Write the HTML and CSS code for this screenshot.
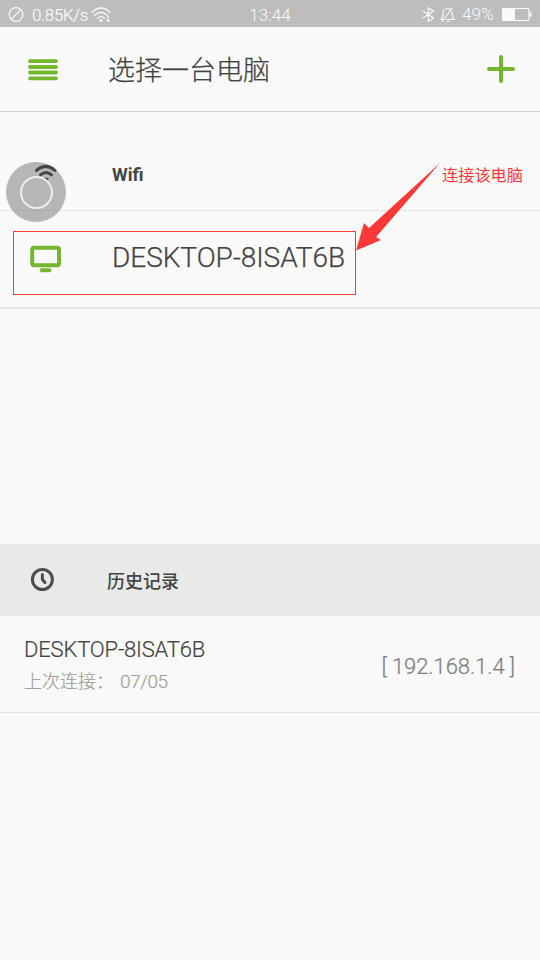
FILE: index.html
```html
<!DOCTYPE html>
<html lang="zh-CN">
<head>
<meta charset="utf-8">
<title>选择一台电脑</title>
<link rel="stylesheet" href="styles.css">
</head>
<body>
<main class="screen">
  <div class="status">
    <div class="status-left">
      <svg class="icon" width="16" height="16" viewBox="0 0 16 16"><circle cx="8" cy="7.500" r="6.800"/><path d="M3.200 12.300 12.800 2.700"/></svg>
      <span class="speed">0.85K/s</span>
      <svg class="icon signal" width="20" height="16" viewBox="0 0 20 16"><path d="M1 5.200Q10-3.200 19 5.200M3.700 8.300Q10 2.500 16.300 8.300M6.400 11.300Q10 8 13.600 11.300"/><circle class="dot" cx="10" cy="13.500" r="1.500"/><circle class="dot" cx="17" cy="10" r="1.100"/><circle class="dot" cx="17" cy="13.500" r="1.400"/></svg>
    </div>
    <span class="clock">13:44</span>
    <div class="status-right">
      <svg class="icon" width="13" height="16" viewBox="0 0 13 16"><path d="m1 4 10.500 7L6.300 14.500V.8L11.500 4 1 11"/></svg>
      <svg class="icon bell" width="15" height="16" viewBox="0 0 15 16"><path d="M4 12.500H1c2-2 2-4 2-6C3 3.500 5 1.500 7.500 1.500c1 0 2 .3 2.800 1M12 5c.2 3-.2 5.500 2 7.500H6.500M7 14.500h2M2 14.500 12.500 1"/></svg>
      <span class="percent">49%</span>
      <svg class="icon" width="30" height="14" viewBox="0 0 30 14"><rect x=".5" y=".5" width="26.500" height="12" rx="1"/><path class="dot" d="M1 1h12v11H1zM27.500 4.500h2v4h-2z"/></svg>
    </div>
  </div>
  <header class="header">
    <svg class="menu" width="30" height="22" viewBox="0 0 30 22"><path d="M2 2.200h26M2 8h26M2 13.500h26M2 19.300h26"/></svg>
    <h1 class="title">选择一台电脑</h1>
    <svg class="plus" width="28" height="28" viewBox="0 0 28 28"><path d="M14 2v24M2 14h24"/></svg>
  </header>
  <section class="wifi">
    <svg class="wifi-icon" width="24" height="20" viewBox="0 0 24 20"><path d="M2.500 6.500Q12-1.800 21 6.500M6.500 10.800Q12 6.300 17.500 10.800"/><path class="dot" d="M9 14.800q3-2.300 6 0L12 17.500z"/></svg>
    <h2 class="wifi-label">Wifi</h2>
    <span class="note">连接该电脑</span>
  </section>
  <section class="computer">
    <svg class="monitor" width="32" height="28" viewBox="0 0 32 28"><rect x="2.200" y="2.700" width="26.800" height="17.500" rx="2"/><path d="M11.800 25.200h7.500"/></svg>
    <span class="computer-name">DESKTOP-8ISAT6B</span>
  </section>
  <section class="history">
    <svg class="history-icon" width="24" height="24" viewBox="0 0 24 24"><circle cx="12.400" cy="11.500" r="10"/><path d="M12.400 6.500v5l2.600 3"/></svg>
    <h2 class="history-label">历史记录</h2>
  </section>
  <section class="entry">
    <div class="entry-main">
      <div class="entry-name">DESKTOP-8ISAT6B</div>
      <div class="entry-last"><span class="last-label">上次连接：</span><span class="date">07/05</span></div>
    </div>
    <span class="ip">[ 192.168.1.4 ]</span>
  </section>
  <div class="highlight"></div>
  <svg class="arrow" width="90" height="92" viewBox="0 0 90 92"><path d="M85 3 21 77l5 3-25 10.500L9 63l5 5z"/></svg>
  <div class="assist"><span class="assist-ring"></span></div>
</main>
</body>
</html>
```
FILE: styles.css
```css
* { box-sizing: border-box; }
body { margin: 0; background: #f9f9f9; font-family: Roboto, "Noto Sans CJK SC", sans-serif; color: #444; }
svg { display: block; flex: none; fill: none; overflow: visible; stroke-linecap: round; stroke-linejoin: round; }
h1, h2 { margin: 0; }
.screen { position: relative; width: 540px; height: 960px; overflow: hidden; }
.status { height: 27px; padding: 0 8px; display: grid; grid-template-columns: 1fr auto 1fr; align-items: center; background: #bdbdbd; color: #fafafa; font-size: 17px; font-weight: 300; line-height: 27px; }
.status-left, .status-right { display: flex; align-items: center; }
.status-right { justify-content: flex-end; }
.icon { stroke: #fafafa; stroke-width: 1.2; }
.dot { fill: #fafafa; stroke: none; }
.speed { margin-left: 8px; width: 59px; letter-spacing: -.35px; padding-top: 2px; -webkit-text-stroke: .2px; }
.clock { padding-top: 2px; }
.bell { margin-left: 5px; }
.percent { margin: 0 8px 0 7px; letter-spacing: .2px; }
.header { height: 85px; padding: 0 25px 0 28px; display: flex; align-items: center; border-bottom: 1px solid #d2d2d2; }
.menu { margin-top: 1px; stroke: #74b72e; stroke-width: 3.8; }
.title { margin-left: 50px; padding-top: 3px; flex: 1; font-size: 27px; font-weight: 300; line-height: 40px; -webkit-text-stroke: .25px; }
.plus { stroke: #74b72e; stroke-width: 4; }
.wifi { height: 99px; padding: 0 17px 0 34px; display: flex; align-items: flex-start; border-bottom: 1px solid #e3e3e3; }
.wifi-icon { position: relative; z-index: 1; margin-top: 52px; stroke: #444; stroke-width: 3; }
.wifi-icon .dot { fill: #444; }
.wifi-label { margin: 52px auto 0 54px; font-size: 18px; font-weight: 700; line-height: 22px; }
.note { margin-top: 52px; color: #ff3838; font-size: 16.200px; line-height: 24px; }
.computer { height: 98px; padding: 34px 0 0 30px; display: flex; align-items: flex-start; border-bottom: 2px solid #e5e5e5; }
.monitor { stroke: #74b72e; stroke-width: 4; }
.computer-name { margin-left: 50px; margin-top: -4px; font-size: 28px; font-weight: 300; letter-spacing: -.05px; line-height: 34px; -webkit-text-stroke: .25px; }
.history { margin-top: 235px; height: 72px; padding-left: 30px; display: flex; align-items: center; background: #e7eae6; }
.history-icon { stroke: #4d4d4d; stroke-width: 3; }
.history-label { margin-left: 53px; padding-top: 3px; font-size: 18px; font-weight: 500; line-height: 26px; }
.entry { height: 97px; padding: 4px 25px 0 24px; display: flex; align-items: center; justify-content: space-between; border-bottom: 1px solid #e3e3e3; }
.entry-name { font-size: 22px; font-weight: 300; letter-spacing: -.18px; line-height: 32px; -webkit-text-stroke: .2px; }
.entry-last { display: flex; color: #a0a098; font-size: 18px; font-weight: 300; line-height: 32px; -webkit-text-stroke: .2px; }
.last-label { width: 96px; white-space: nowrap; }
.date { font-size: 19px; letter-spacing: -.4px; }
.ip { color: #808080; font-size: 22px; font-weight: 300; letter-spacing: -.08px; -webkit-text-stroke: .2px; }
.highlight { position: absolute; left: 13px; top: 231px; width: 343px; height: 64px; border: 1px solid #ff3838; }
.arrow { position: absolute; left: 355px; top: 160px; fill: #ff3838; }
.assist { position: absolute; left: 6px; top: 162px; width: 60px; height: 60px; border-radius: 50%; background: rgba(128, 128, 128, .55); display: grid; place-items: center; }
.assist-ring { position: relative; z-index: 2; width: 33px; height: 33px; border: 2px solid #ededed; border-radius: 50%; }
```
